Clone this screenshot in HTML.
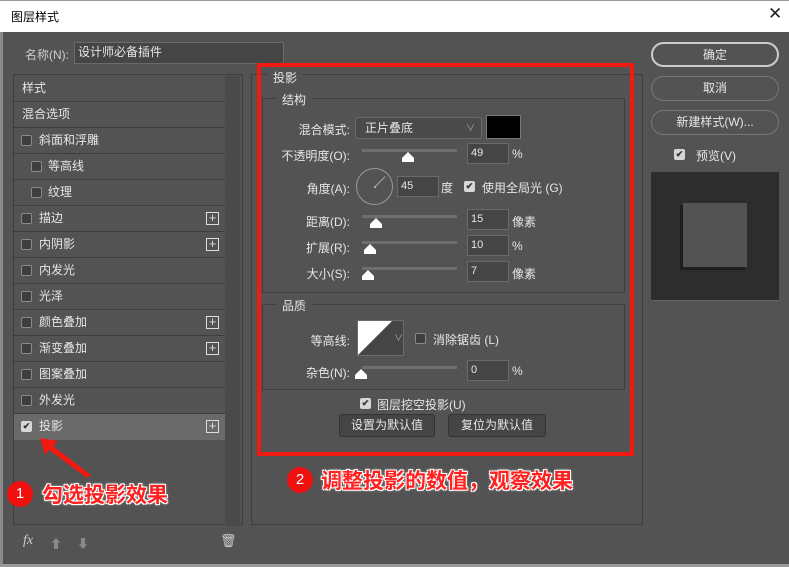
<!DOCTYPE html>
<html><head><meta charset="utf-8"><style>
*{margin:0;padding:0;box-sizing:border-box}
body{width:789px;height:567px;background:#535353;font-family:"Liberation Sans","Noto Sans CJK SC",sans-serif;font-size:12px;color:#e6e6e6;position:relative;overflow:hidden}
.a{position:absolute}
.inp{position:absolute;background:#454545;border:1px solid #6a6a6a;color:#e6e6e6;padding-left:3px;font-size:11px;line-height:19px;height:21px}
.row{position:absolute;left:14px;width:211px;height:26px;border-bottom:1px solid #3d3d3d;line-height:25px;padding-left:8px}
.cb{position:absolute;width:11px;height:11px;border:1px solid #8a8a8a;border-radius:2px;background:#3e3e3e}
.cbc{position:absolute;width:11px;height:11px;border-radius:2px;background:#d6d6d6;color:#333;font-size:9px;line-height:11px;text-align:center;font-weight:bold}
.plus{position:absolute;left:205px;width:13px;height:13px;border:1px solid #ddd;color:#ddd;font-size:13px;line-height:10px;text-align:center}
.sl{position:absolute;left:362px;width:95px;height:3px;background:#6e6e6e}
.th{position:absolute;width:0;height:0;border-left:6px solid transparent;border-right:6px solid transparent;border-bottom:6px solid #fff}
.th:after{content:"";position:absolute;left:-6px;top:6px;width:12px;height:4px;background:#fff}
.lbl{position:absolute;text-align:right;width:100px}
.btn{position:absolute;border:1px solid #8a8a8a;border-radius:13px;text-align:center;line-height:22px;height:25px}
.fs{position:absolute;border:1px solid #3e3e3e}
.lg{position:absolute;background:#535353;padding:0 6px}
.ann{position:absolute;color:#ff2020;font-weight:bold;font-size:21px;text-shadow:-1px -1px 0 #fff,1px -1px 0 #fff,-1px 1px 0 #fff,1px 1px 0 #fff,0 0 3px #fff}
.num{position:absolute;width:26px;height:26px;border-radius:13px;background:#f01010;color:#fff;font-size:15px;text-align:center;line-height:26px}
</style></head><body>
<div class="a" style="left:0;top:0;width:789px;height:32px;background:#fff;border-top:1px solid #999"></div>
<div class="a" style="left:11px;top:8px;color:#000;font-size:12px">图层样式</div>
<div class="a" style="left:768px;top:4px;color:#222;font-size:17px;font-weight:normal">✕</div>
<div class="a" style="left:0;top:32px;width:3px;height:535px;background:#8a8a8a"></div>
<div class="a" style="left:0;top:564px;width:789px;height:3px;background:#9a9a9a"></div>

<div class="a" style="left:25px;top:46px;color:#ccc">名称(N):</div>
<div class="inp" style="left:74px;top:42px;width:210px;height:22px;font-size:12px">设计师必备插件</div>

<div class="a" style="left:13px;top:74px;width:230px;height:451px;border:1px solid #3e3e3e"></div>
<div class="a" style="left:225px;top:76px;width:15px;height:450px;background:#4a4a4a"></div>
<div class="row" style="top:76px">样式</div>
<div class="row" style="top:102px">混合选项</div>
<div class="row" style="top:128px;padding-left:25px"><span class="cb" style="left:7px;top:7px"></span>斜面和浮雕</div>
<div class="row" style="top:154px;padding-left:34px"><span class="cb" style="left:17px;top:7px"></span>等高线</div>
<div class="row" style="top:180px;padding-left:34px"><span class="cb" style="left:17px;top:7px"></span>纹理</div>
<div class="row" style="top:206px;padding-left:25px"><span class="cb" style="left:7px;top:7px"></span>描边<span class="plus" style="left:192px;top:6px">+</span></div>
<div class="row" style="top:232px;padding-left:25px"><span class="cb" style="left:7px;top:7px"></span>内阴影<span class="plus" style="left:192px;top:6px">+</span></div>
<div class="row" style="top:258px;padding-left:25px"><span class="cb" style="left:7px;top:7px"></span>内发光</div>
<div class="row" style="top:284px;padding-left:25px"><span class="cb" style="left:7px;top:7px"></span>光泽</div>
<div class="row" style="top:310px;padding-left:25px"><span class="cb" style="left:7px;top:7px"></span>颜色叠加<span class="plus" style="left:192px;top:6px">+</span></div>
<div class="row" style="top:336px;padding-left:25px"><span class="cb" style="left:7px;top:7px"></span>渐变叠加<span class="plus" style="left:192px;top:6px">+</span></div>
<div class="row" style="top:362px;padding-left:25px"><span class="cb" style="left:7px;top:7px"></span>图案叠加</div>
<div class="row" style="top:388px;padding-left:25px"><span class="cb" style="left:7px;top:7px"></span>外发光</div>
<div class="row" style="top:414px;padding-left:25px;background:#6a6a6a;border:0"><span class="cbc" style="left:7px;top:7px">✔</span>投影<span class="plus" style="left:192px;top:6px">+</span></div>
<div class="a" style="left:23px;top:533px;font-style:italic;color:#ccc;font-family:'Liberation Serif',serif;font-size:14px">fx</div>
<div class="a" style="left:50px;top:535px;color:#888;font-size:12px">⬆</div>
<div class="a" style="left:77px;top:535px;color:#888;font-size:12px">⬇</div>
<div class="a" style="left:220px;top:533px;color:#ccc;font-size:13px">🗑</div>

<div class="a" style="left:251px;top:74px;width:392px;height:451px;border:1px solid #3e3e3e"></div>
<div class="a" style="left:257px;top:63px;width:377px;height:393px;border:4px solid #f01a10"></div>
<div class="lg" style="left:267px;top:69px">投影</div>
<div class="fs" style="left:262px;top:98px;width:363px;height:195px"></div>
<div class="lg" style="left:276px;top:91px">结构</div>
<div class="lbl" style="left:250px;top:121px">混合模式:</div>
<div class="a" style="left:355px;top:117px;width:127px;height:22px;border:1px solid #6a6a6a;border-radius:3px;background:#4a4a4a;padding-left:9px;line-height:20px">正片叠底<span style="position:absolute;right:6px;top:0;color:#aaa;font-size:9px">∨</span></div>
<div class="a" style="left:486px;top:115px;width:35px;height:24px;background:#000;border:1px solid #777"></div>
<div class="lbl" style="left:250px;top:147px">不透明度(O):</div>
<div class="sl" style="top:149px"></div><div class="th" style="left:402px;top:152px"></div>
<div class="inp" style="left:467px;top:143px;width:42px">49</div><div class="a" style="left:512px;top:147px">%</div>
<div class="lbl" style="left:250px;top:180px">角度(A):</div>
<div class="a" style="left:356px;top:168px;width:37px;height:37px;border:1px solid #999;border-radius:50%"></div>
<div class="a" style="left:374px;top:186px;width:2px;height:2px;background:#aaa"></div>
<div class="a" style="left:375px;top:186px;width:14px;height:1px;background:#aaa;transform:rotate(-45deg);transform-origin:0 0"></div>
<div class="inp" style="left:397px;top:176px;width:42px">45</div><div class="a" style="left:441px;top:179px">度</div>
<div class="cbc" style="left:464px;top:181px">✔</div><div class="a" style="left:482px;top:179px">使用全局光 (G)</div>
<div class="lbl" style="left:250px;top:213px">距离(D):</div>
<div class="sl" style="top:215px"></div><div class="th" style="left:370px;top:218px"></div>
<div class="inp" style="left:467px;top:209px;width:42px">15</div><div class="a" style="left:512px;top:213px">像素</div>
<div class="lbl" style="left:250px;top:239px">扩展(R):</div>
<div class="sl" style="top:241px"></div><div class="th" style="left:364px;top:244px"></div>
<div class="inp" style="left:467px;top:235px;width:42px">10</div><div class="a" style="left:512px;top:239px">%</div>
<div class="lbl" style="left:250px;top:265px">大小(S):</div>
<div class="sl" style="top:267px"></div><div class="th" style="left:362px;top:270px"></div>
<div class="inp" style="left:467px;top:261px;width:42px">7</div><div class="a" style="left:512px;top:265px">像素</div>

<div class="fs" style="left:262px;top:304px;width:363px;height:86px"></div>
<div class="lg" style="left:276px;top:297px">品质</div>
<div class="lbl" style="left:250px;top:332px">等高线:</div>
<div class="a" style="left:357px;top:320px;width:47px;height:36px;border:1px solid #6a6a6a;background:#454545"></div>
<svg class="a" style="left:358px;top:321px" width="34" height="34"><polygon points="0,0 34,0 0,34" fill="#fff"/></svg>
<div class="a" style="left:394px;top:331px;color:#aaa;font-size:9px">∨</div>
<div class="cb" style="left:415px;top:333px"></div><div class="a" style="left:433px;top:331px">消除锯齿 (L)</div>
<div class="lbl" style="left:250px;top:364px">杂色(N):</div>
<div class="sl" style="top:366px"></div><div class="th" style="left:355px;top:369px"></div>
<div class="inp" style="left:467px;top:360px;width:42px">0</div><div class="a" style="left:512px;top:364px">%</div>
<div class="cbc" style="left:360px;top:398px">✔</div><div class="a" style="left:377px;top:396px">图层挖空投影(U)</div>
<div class="a" style="left:339px;top:414px;width:96px;height:23px;background:#454545;border:1px solid #333;border-radius:3px;text-align:center;line-height:21px">设置为默认值</div>
<div class="a" style="left:448px;top:414px;width:98px;height:23px;background:#454545;border:1px solid #333;border-radius:3px;text-align:center;line-height:21px">复位为默认值</div>

<div class="btn" style="left:651px;top:42px;width:128px;border:2px solid #ccc">确定</div>
<div class="btn" style="left:651px;top:76px;width:128px;border-color:#777">取消</div>
<div class="btn" style="left:651px;top:110px;width:128px;border-color:#777">新建样式(W)...</div>
<div class="cbc" style="left:674px;top:149px">✔</div><div class="a" style="left:696px;top:147px">预览(V)</div>
<div class="a" style="left:651px;top:172px;width:128px;height:129px;background:#2d2d2d;border-bottom:1px solid #666"></div>
<div class="a" style="left:680px;top:205px;width:65px;height:65px;background:#1e1e1e"></div>
<div class="a" style="left:683px;top:203px;width:64px;height:64px;background:#535353"></div>

<div class="num" style="left:7px;top:481px">1</div>
<div class="ann" style="left:42px;top:479px">勾选投影效果</div>
<svg class="a" style="left:36px;top:435px" width="60" height="45"><polygon points="4,3 22,6 17,11 55,40 51,43 13,15 9,20" fill="#f01a10"/></svg>
<div class="num" style="left:287px;top:467px">2</div>
<div class="ann" style="left:321px;top:465px">调整投影的数值，观察效果</div>
</body></html>
